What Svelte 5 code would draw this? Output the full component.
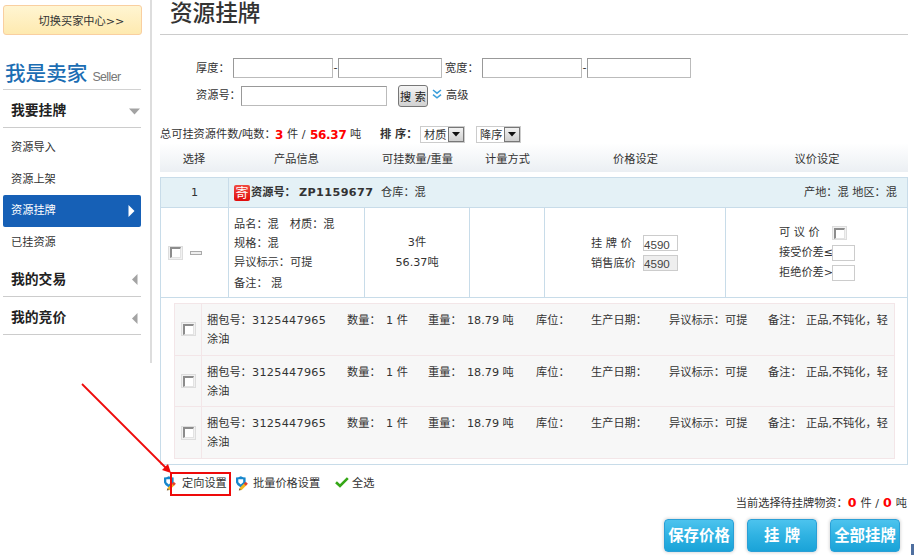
<!-- SellerListing.svelte -->
<script>
  let openItems = ['资源导入', '资源上架', '资源挂牌', '已挂资源'];
  let active = '资源挂牌';
  let columns = ['选择', '产品信息', '可挂数量/重量', '计量方式', '价格设定', '议价设定'];
  let bundles = [
    { no: '3125447965', count: 1, weight: '18.79' },
    { no: '3125447965', count: 1, weight: '18.79' },
    { no: '3125447965', count: 1, weight: '18.79' }
  ];
  let listPrice = '4590';
  let basePrice = '4590';
</script>

{#snippet check()}
  <span class="check"><i></i></span>
{/snippet}

{#snippet editIcon()}
  <svg class="edit" width="13" height="15" viewBox="0 0 13 15">
    <path d="M1 1.6Q3.5 1.4 5.8 0.3Q8 1.4 10.6 1.6V6.5Q9.8 9.5 5.8 11.6Q1.8 9.5 1 6.5Z" fill="#1787cc" />
    <path d="M3.3 3.2H8.2V6.3L5.8 8.4L3.3 6.3Z" fill="#fff" />
    <path d="M5.4 13.2L10.4 8.2" stroke="#f5b51c" stroke-width="3" />
    <path d="M9.8 8.8L11.8 6.8" stroke="#e2402c" stroke-width="3" />
    <path d="M3.8 14.6L4.4 12.2L6.3 14.1Z" fill="#7a5a28" />
  </svg>
{/snippet}

<div class="page">
  <aside>
    <button class="switch">切换买家中心&gt;&gt;</button>
    <div class="brand"><b>我是卖家</b><span>Seller</span></div>
    <div class="group first">
      <span>我要挂牌</span>
      <svg width="12" height="7"><path d="M0 0.5H11L5.5 6.5Z" fill="#a3a3a3" /></svg>
    </div>
    <ul>
      {#each openItems as item}
        <li class:active={item === active}>
          {item}
          {#if item === active}
            <svg width="7" height="12"><path d="M0.5 0L6.5 6L0.5 12Z" fill="#fff" /></svg>
          {/if}
        </li>
      {/each}
    </ul>
    <div class="group trade">
      <span>我的交易</span>
      <svg width="8" height="11"><path d="M6.5 0V11L1 5.5Z" fill="#a3a3a3" /></svg>
    </div>
    <div class="group bid">
      <span>我的竞价</span>
      <svg width="8" height="11"><path d="M6.5 0V11L1 5.5Z" fill="#a3a3a3" /></svg>
    </div>
  </aside>

  <main>
    <h1>资源挂牌</h1>

    <div class="search">
      <div class="line">
        <label for="thick1">厚度：</label>
        <input id="thick1" type="text" class="short">
        <em>-</em>
        <input type="text" class="mid">
        <label for="width1" class="wide">宽度：</label>
        <input id="width1" type="text" class="short">
        <em>-</em>
        <input type="text" class="mid">
      </div>
      <div class="line second">
        <label for="resno" class="res">资源号：</label>
        <input id="resno" type="text" class="long">
        <button class="find">搜 索</button>
        <svg class="more" width="10" height="11" viewBox="0 0 10 11">
          <path d="M1 1L5 4.2L9 1M1 5.6L5 8.8L9 5.6" fill="none" stroke="#3c9fdb" stroke-width="1.5" />
        </svg>
        <span>高级</span>
      </div>
    </div>

    <div class="summary">
      <span class="total">总可挂资源件数/吨数：</span>
      <b class="red n1">3</b>
      <span class="u1">件 /</span>
      <b class="red n2">56.37</b>
      <span class="u2">吨</span>
      <b class="sort">排 序：</b>
      <span class="select">材质<i><svg width="8" height="5"><path d="M0 0H8L4 4.5Z" fill="#111" /></svg></i></span>
      <span class="select">降序<i><svg width="8" height="5"><path d="M0 0H8L4 4.5Z" fill="#111" /></svg></i></span>
    </div>

    <div class="thead cols">
      {#each columns as col}
        <span>{col}</span>
      {/each}
    </div>

    <div class="table">
      <div class="resource">
        <span class="index">1</span>
        <span class="info">
          <span class="seal">寄</span>
          <b class="rno">资源号：</b><b class="code">ZP1159677</b>
          <span>仓库：混</span>
        </span>
        <span class="origin">产地：混 地区：混</span>
      </div>

      <div class="detail cols">
        <div class="pick">{@render check()}<span class="minus"></span></div>
        <div class="product">
          <p><span>品名：混</span><span>材质：混</span></p>
          <p>规格：混</p>
          <p class="mark">异议标示：可提</p>
          <p class="note">备注：&nbsp;混</p>
        </div>
        <div class="amount"><p>3件</p><p>56.37吨</p></div>
        <div></div>
        <div class="price">
          <p><span>挂 牌 价</span><input type="text" bind:value={listPrice}></p>
          <p><span>销售底价</span><input type="text" class="off" value={basePrice} readonly></p>
        </div>
        <div class="bargain">
          <p class="can"><span>可 议 价</span>{@render check()}</p>
          <p><span>接受价差≤</span><input type="text"></p>
          <p><span>拒绝价差&gt;</span><input type="text"></p>
        </div>
      </div>

      <div class="bundles">
        {#each bundles as b}
          <div class="bundle">
            <div class="tick">{@render check()}</div>
            <div class="text">
              <div class="fields">
                <span>捆包号：</span>
                <span class="num">{b.no}</span>
                <span>数量：</span>
                <span>{b.count} 件</span>
                <span>重量：</span>
                <span>{b.weight} 吨</span>
                <span>库位：</span>
                <span>生产日期：</span>
                <span>异议标示：可提</span>
                <span>备注：</span>
                <span>正品,不钝化，轻</span>
              </div>
              <div>涂油</div>
            </div>
          </div>
        {/each}
      </div>
    </div>

    <div class="tools">
      {@render editIcon()}
      <span class="direct">定向设置</span>
      {@render editIcon()}
      <span class="batch">批量价格设置</span>
      <svg class="ok" width="14" height="11" viewBox="0 0 14 11">
        <path d="M1 5.2L5 9L12.8 1.2" fill="none" stroke="#35a716" stroke-width="2.6" />
      </svg>
      <span>全选</span>
    </div>

    <div class="chosen">当前选择待挂牌物资：<b class="red">0</b><span>件 /</span><b class="red">0</b><span>吨</span></div>

    <div class="actions">
      <button>保存价格</button>
      <button>挂 牌</button>
      <button>全部挂牌</button>
    </div>
  </main>

  <!-- callout for the direct setting link -->
  <svg class="callout" width="160" height="120" viewBox="0 0 160 120">
    <path d="M2 4L86 88" stroke="#ee0a0a" stroke-width="1.8" />
    <path d="M91 93L82 90L88 84Z" fill="#ee0a0a" />
    <rect x="91" y="93" width="59" height="22" fill="none" stroke="#ee0a0a" stroke-width="2" />
  </svg>
  <div class="corner"></div>
</div>

<style>
  :global(body) {
    margin: 0;
    background: #fff;
  }

  .page {
    position: relative;
    display: flex;
    width: 914px;
    height: 555px;
    overflow: hidden;
    font-family: "DejaVu Sans", "Noto Sans CJK SC", sans-serif;
    font-size: 11.2px;
    line-height: 20px;
    color: #333;
    white-space: nowrap;
  }

  p, h1, ul {
    margin: 0;
    padding: 0;
    list-style: none;
  }

  button, input {
    font-family: inherit;
    box-sizing: border-box;
    margin: 0;
    padding: 0;
  }

  .red {
    color: #f00;
  }

  /* sidebar */
  aside {
    box-sizing: border-box;
    width: 152px;
    height: 363px;
    padding: 5px 8px 0 3px;
    border-right: 2px solid #ddd;
    flex-shrink: 0;
  }

  .switch {
    display: block;
    width: 139px;
    height: 30px;
    padding-left: 18px;
    border: 1px solid #f9cfa0;
    border-radius: 3px;
    background: linear-gradient(#fff5d2, #feeab0);
    font-size: 11.2px;
    color: #333;
  }

  .brand {
    display: flex;
    align-items: baseline;
    box-sizing: border-box;
    height: 55px;
    padding: 26px 0 0 2px;
    border-bottom: 1px solid #d2d2d2;
    width: 138px;
    line-height: 22px;
  }

  .brand b {
    font-family: "Noto Sans CJK SC", sans-serif;
    font-size: 20.6px;
    font-weight: 500;
    color: #1b6db3;
  }

  .brand span {
    margin-left: 5px;
    font-family: "Liberation Sans", sans-serif;
    font-size: 12.4px;
    letter-spacing: -0.6px;
    color: #777;
  }

  .group {
    display: flex;
    justify-content: space-between;
    align-items: center;
    box-sizing: border-box;
    width: 138px;
    height: 38px;
    padding: 0 2px 0 8px;
    border-bottom: 1px solid #ccc;
    font-family: "Noto Sans CJK SC", sans-serif;
    font-size: 13.8px;
    font-weight: bold;
    color: #222;
  }

  .group svg {
    margin-top: 5px;
  }

  .group span {
    margin-top: 1px;
  }

  .trade {
    height: 39px;
  }

  .first {
    padding-right: 0;
  }

  ul {
    padding-top: 4px;
  }

  li {
    display: flex;
    align-items: center;
    justify-content: space-between;
    box-sizing: border-box;
    width: 138px;
    height: 31.5px;
    padding: 1px 6px 0 8px;
  }

  li.active {
    background: #1660b6;
    border-radius: 2px;
    color: #fff;
  }

  /* content */
  main {
    display: flex;
    flex-direction: column;
    width: 748px;
    margin-left: 8px;
  }

  h1 {
    box-sizing: border-box;
    height: 35px;
    padding: 1px 0 0 10px;
    border-bottom: 1px solid #ccc;
    font-family: "Liberation Sans", "Noto Sans CJK SC", sans-serif;
    font-size: 22.6px;
    font-weight: 500;
    line-height: 26px;
  }

  .search {
    height: 68px;
    padding: 23px 0 0 36px;
  }

  .line {
    display: flex;
    height: 20px;
    line-height: 22px;
  }

  .line input {
    height: 20px;
    border: 1px solid #aaa;
    border-color: #999 #bbb #bbb #999;
    background: #fff;
  }

  .line label {
    width: 37px;
  }

  .line .wide {
    width: 37px;
    padding-left: 3px;
  }

  .line .res {
    width: 45px;
  }

  .line em {
    width: 5px;
    font-style: normal;
    line-height: 20px;
    text-align: center;
  }

  .short {
    width: 100px;
  }

  .mid {
    width: 104px;
  }

  .long {
    width: 146px;
  }

  .second {
    align-items: center;
    margin-top: 8px;
  }

  .find {
    width: 30px;
    height: 22px;
    margin-left: 11px;
    border: 1px solid #777;
    border-radius: 3px;
    background: linear-gradient(#f4f4f4, #d2d2d2);
    font-size: 11.2px;
    color: #222;
  }

  .more {
    margin: -3px 4px 0 4px;
  }

  .summary {
    display: flex;
    align-items: center;
    height: 17px;
    line-height: 22px;
  }

  .total {
    width: 115px;
  }

  .n1 {
    width: 12px;
    font-size: 12px;
  }

  .u1 {
    width: 23px;
  }

  .n2 {
    width: 40px;
    font-size: 12px;
    letter-spacing: -0.3px;
  }

  .u2 {
    width: 30px;
  }

  .sort {
    width: 40px;
  }

  .select {
    display: flex;
    justify-content: space-between;
    box-sizing: border-box;
    width: 45px;
    height: 17px;
    margin-right: 11px;
    padding-left: 3px;
    border: 1px solid #ccc;
    line-height: 17px;
  }

  .select i {
    display: flex;
    align-items: center;
    justify-content: center;
    box-sizing: border-box;
    width: 16px;
    height: 15px;
    border: 1px solid #777;
    background: linear-gradient(#f2f2f2, #cfcfcf);
  }

  .cols {
    display: grid;
    grid-template-columns: 68px 137px 105px 75px 181px 182px;
  }

  .thead {
    height: 29px;
    background: linear-gradient(#fff, #ebeff3);
    line-height: 34px;
    text-align: center;
  }

  .table {
    box-sizing: border-box;
    height: 288px;
    margin-top: 5px;
    border: 1px solid #c8dce9;
  }

  .resource {
    display: flex;
    height: 29px;
    background: #e4f1f6;
    line-height: 29px;
  }

  .index {
    width: 67px;
    border-right: 1px solid #c8dce9;
    text-align: center;
  }

  .info {
    display: flex;
    align-items: center;
    flex: 1;
    padding-left: 5px;
  }

  .seal {
    width: 16px;
    height: 16px;
    border-radius: 2px;
    background: linear-gradient(#f04a40, #e00c0c);
    color: #fff;
    font-size: 13px;
    line-height: 15px;
    text-align: center;
  }

  .rno {
    width: 48px;
    padding-left: 1px;
  }

  .code {
    width: 82px;
    letter-spacing: 0.4px;
  }

  .origin {
    padding-right: 10px;
  }

  .detail {
    height: 89px;
    border-top: 1px solid #c8dce9;
    border-bottom: 1px solid #c8dce9;
    margin-right: -1px;
    margin-left: -1px;
  }

  .detail > div {
    border-right: 1px solid #c8dce9;
  }

  .detail > .pick {
    display: flex;
    align-items: center;
    gap: 7px;
    padding-left: 7px;
    border-left: 1px solid #c8dce9;
  }

  .pick {
    box-sizing: border-box;
    width: 69px;
  }

  .check {
    display: inline-flex;
    align-items: center;
    justify-content: center;
    box-sizing: border-box;
    width: 15px;
    height: 14px;
    border: 1px solid #ddd;
    background: #f1f1f1;
  }

  .check i {
    box-sizing: border-box;
    width: 11px;
    height: 11px;
    border: 1px solid #e3e3e3;
    border-top: 2px solid #8c8c8c;
    border-left: 2px solid #8c8c8c;
    background: #fff;
  }

  .minus {
    box-sizing: border-box;
    width: 12px;
    height: 4px;
    border: 1px solid #aaa;
    background: #eee;
  }

  .product {
    padding: 7px 0 0 6px;
  }

  .product p {
    height: 19px;
    line-height: 19px;
  }

  .product p span + span {
    margin-left: 11px;
  }

  .product .mark {
    height: 21px;
  }

  .amount {
    padding-top: 25px;
    text-align: center;
  }

  .amount p, .price p {
    height: 19.5px;
    line-height: 19.5px;
  }

  .price {
    padding: 26px 0 0 46px;
  }

  .price p {
    display: flex;
  }

  .price span {
    width: 52px;
  }

  .price input {
    width: 35px;
    height: 16px;
    margin-top: 1px;
    padding-top: 2px;
    border: 1px solid #ccc;
    font-family: "Liberation Sans", sans-serif;
    font-size: 11.6px;
    color: #444;
  }

  .price .off {
    background: #eee;
  }

  .bargain {
    padding: 15px 0 0 53px;
  }

  .bargain p {
    display: flex;
    height: 20px;
    line-height: 20px;
  }

  .bargain span:first-child {
    width: 53px;
  }

  .bargain .check {
    margin-top: 3px;
  }

  .bargain input {
    width: 23px;
    height: 16px;
    margin-top: 2px;
    border: 1px solid #ccc;
  }

  .bundles {
    width: 721px;
    margin: 5px 0 0 13px;
    box-sizing: border-box;
    border: 1px solid #f3e6e8;
    background: #f7f7f7;
  }

  .bundle {
    display: flex;
    height: 50.7px;
  }

  .bundle + .bundle {
    border-top: 1px solid #f3e6e8;
  }

  .tick {
    display: flex;
    align-items: center;
    justify-content: center;
    width: 26px;
    border-right: 1px solid #f3e6e8;
  }

  .text {
    padding: 7px 0 0 5px;
    line-height: 19px;
  }

  .fields {
    display: grid;
    grid-template-columns: 45px 95px 39px 42px 39px 69px 55px 78px 99px 38px 82px;
  }

  .num {
    letter-spacing: 0.3px;
  }

  .tools {
    display: flex;
    align-items: center;
    height: 20px;
    margin-top: 9px;
    padding-left: 3px;
  }

  .edit {
    margin-top: -2px;
  }

  .tools .direct {
    width: 53px;
    padding-left: 6px;
  }

  .tools .batch {
    width: 83px;
    padding-left: 5px;
  }

  .ok {
    margin: -3px 3px 0 -1px;
  }

  .chosen {
    height: 20px;
    text-align: right;
  }

  .chosen b {
    font-size: 12.6px;
    line-height: 18px;
  }

  .chosen span {
    margin: 0 4px;
  }

  .chosen span:last-child {
    margin-right: 1px;
  }

  .actions {
    display: flex;
    gap: 13px;
    margin: 5px 0 0 504px;
  }

  .actions button {
    width: 70px;
    height: 33px;
    border: 1px solid #2a9fd6;
    border-radius: 4px;
    background: linear-gradient(#4cc3ee, #2fb2e2 50%, #1aa3d8);
    box-shadow: 0 0 3px 1px #ddd;
    font-size: 15.4px;
    font-weight: bold;
    line-height: 30px;
    color: #fff;
  }

  .callout {
    position: absolute;
    left: 80px;
    top: 380px;
  }

  .corner {
    position: absolute;
    right: 0;
    bottom: 0;
    width: 3px;
    height: 11px;
    background: #4f6f9f;
  }
</style>
